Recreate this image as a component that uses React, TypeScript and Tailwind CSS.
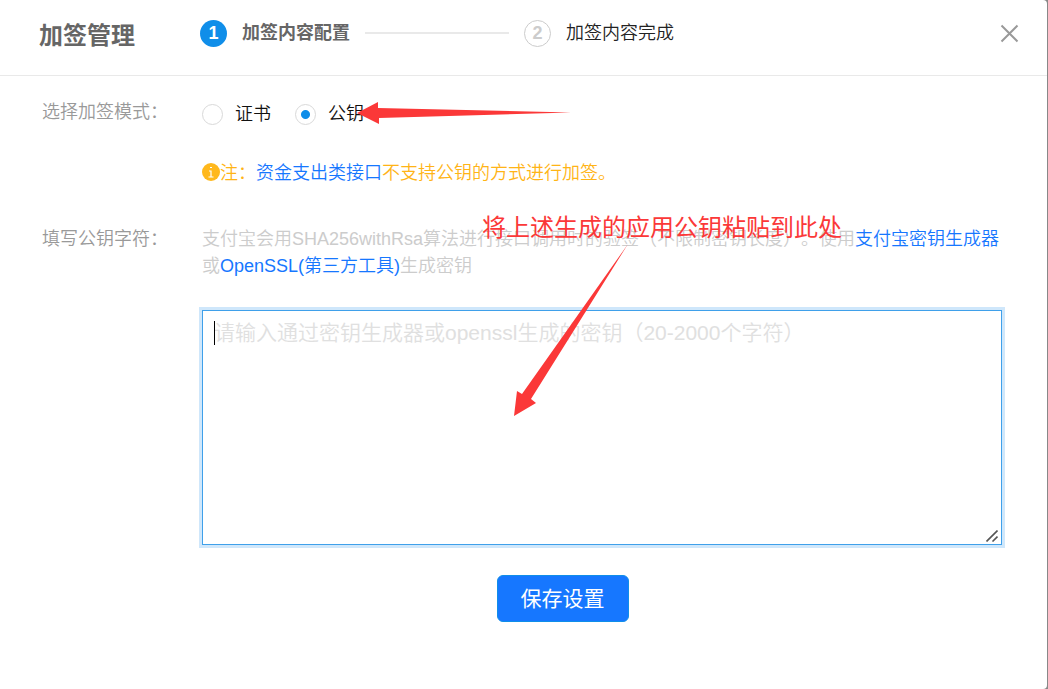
import { useState } from 'react'

function Steps() {
  return (
    <ol className="flex items-center text-lg leading-7">
      <li className="flex items-center" aria-current="step">
        <span className="flex h-[27px] w-[27px] shrink-0 items-center justify-center rounded-full bg-[#108ee9] font-bold text-white">1</span>
        <span className="ml-[15px] font-bold whitespace-nowrap text-[#666666]">加签内容配置</span>
        <span className="mx-[15px] h-[2px] w-36 bg-[#e9e9e9]" />
      </li>
      <li className="flex items-center">
        <span className="flex h-[27px] w-[27px] shrink-0 items-center justify-center rounded-full border border-[#cccccc] font-bold text-[#cccccc]">2</span>
        <span className="ml-[15px] font-[350] whitespace-nowrap text-[#222222]">加签内容完成</span>
      </li>
    </ol>
  )
}

function ModeRadio({ id, label, checked, onSelect }: { id: string; label: string; checked: boolean; onSelect: () => void }) {
  return (
    <div className="flex items-center">
      <input
        id={id}
        type="radio"
        name="mode"
        checked={checked}
        onChange={onSelect}
        className="h-[21px] w-[21px] appearance-none rounded-full border border-[#d9d9d9] bg-white checked:bg-[radial-gradient(circle,#108ee9_4px,transparent_5px)]"
      />
      <label htmlFor={id} className="pl-3 text-[#111111]">{label}</label>
    </div>
  )
}

export default function App() {
  const [mode, setMode] = useState('key')

  return (
    <div className="min-h-screen bg-[#888888] pr-px font-['Liberation_Sans','Noto_Sans_CJK_SC',sans-serif] [text-spacing-trim:space-all]">
      <div className="relative min-h-screen rounded-r-sm bg-white">
        {/* Dialog header */}
        <header className="flex h-[76px] items-start border-b border-[#e9e9e9] pr-7 pl-[39px]">
          <h1 className="w-[161px] shrink-0 pt-[18px] text-2xl leading-9 font-bold text-[#666666]">加签管理</h1>
          <div className="pt-[19px]">
            <Steps />
          </div>
          <button type="button" aria-label="关闭" className="mt-6 ml-auto">
            <svg width="19" height="19" viewBox="0 0 19 19" fill="none" stroke="#999999" strokeWidth="2">
              <path d="M1.5 1.5 17.5 17.5M17.5 1.5 1.5 17.5" />
            </svg>
          </button>
        </header>

        <form className="pt-[23px] pr-[45px] pl-[42px] text-lg leading-[27px] font-[350]" onSubmit={(e) => e.preventDefault()}>
          {/* Signing mode */}
          <div className="flex" role="radiogroup" aria-labelledby="mode-label">
            <div id="mode-label" className="w-40 shrink-0 text-[#999999]">选择加签模式：</div>
            <div className="grow pt-[2px]">
              <div className="flex gap-6">
                <ModeRadio id="mode-cert" label="证书" checked={mode === 'cert'} onSelect={() => setMode('cert')} />
                <ModeRadio id="mode-key" label="公钥" checked={mode === 'key'} onSelect={() => setMode('key')} />
              </div>
              <p className="mt-8 flex items-start text-[#ffb416]">
                <svg width="18" height="18" viewBox="0 0 18 18" className="mt-[3px] shrink-0">
                  <circle cx="9" cy="9" r="9" fill="#ffb81c" />
                  <path d="M8 4.5h2M7 8h2v6M6.500 14h5" fill="none" stroke="#ffffff" strokeWidth="1.2" />
                </svg>
                <span>
                  注：<a href="#api" className="text-[#1677ff]">资金支出类接口</a>不支持公钥的方式进行加签。
                </span>
              </p>
            </div>
          </div>

          {/* Public key */}
          <div className="mt-[39px] flex">
            <label htmlFor="public-key" className="w-40 shrink-0 text-[#999999]">填写公钥字符：</label>
            <div className="min-w-0 grow">
              <p className="text-[#cccccc]">
                支付宝会用SHA256withRsa算法进行接口调用时的验签（不限制密钥长度）。使用<a href="#tool" className="text-[#1677ff]">支付宝密钥生成器</a>或<a href="#openssl" className="text-[#1677ff]">OpenSSL(第三方工具)</a>生成密钥
              </p>
              <div className="relative mt-[30px]">
                <textarea
                  id="public-key"
                  placeholder="请输入通过密钥生成器或openssl生成的密钥（20-2000个字符）"
                  className="block h-[235px] w-full resize-none border border-[#3fa0ea] px-[11px] py-[7px] text-[21px] leading-[30px] text-[#333333] ring-3 ring-[#cfe7fb] outline-none placeholder:text-[#e0e0e0]"
                />
                <span className="absolute top-[11px] left-3 h-6 w-px bg-black" />
                <svg width="12" height="12" viewBox="0 0 12 12" className="absolute right-1 bottom-[3px]" stroke="#555555" strokeWidth="1.6">
                  <path d="M0.500 11.500 11.500 0.500M6.500 11.500 11.500 6.500" />
                </svg>
              </div>
            </div>
          </div>

          <div className="mt-[30px] flex justify-center pl-[81px]">
            <button type="submit" className="h-[47px] w-[132px] rounded-md border border-[#108ee9] bg-[#1677ff] text-[21px] font-normal text-white">保存设置</button>
          </div>
        </form>

        {/* Callouts drawn over the form */}
        <svg width="214" height="22" viewBox="0 0 214 22" className="pointer-events-none absolute top-[102px] left-[357px]" fill="#fb3838">
          <path d="M0 11 21 0V6L214 10.500 22 16V22Z" />
        </svg>
        <p className="pointer-events-none absolute top-[210px] left-[482px] text-2xl leading-9 whitespace-nowrap text-[#fb3838]">将上述生成的应用公钥粘贴到此处</p>
        <svg width="115" height="172" viewBox="0 0 115 172" className="pointer-events-none absolute top-[244px] left-[514px]" fill="#fb3838">
          <path d="M0 172 3 147 8 150 114 0 17 155 22 159Z" />
        </svg>
      </div>
    </div>
  )
}
